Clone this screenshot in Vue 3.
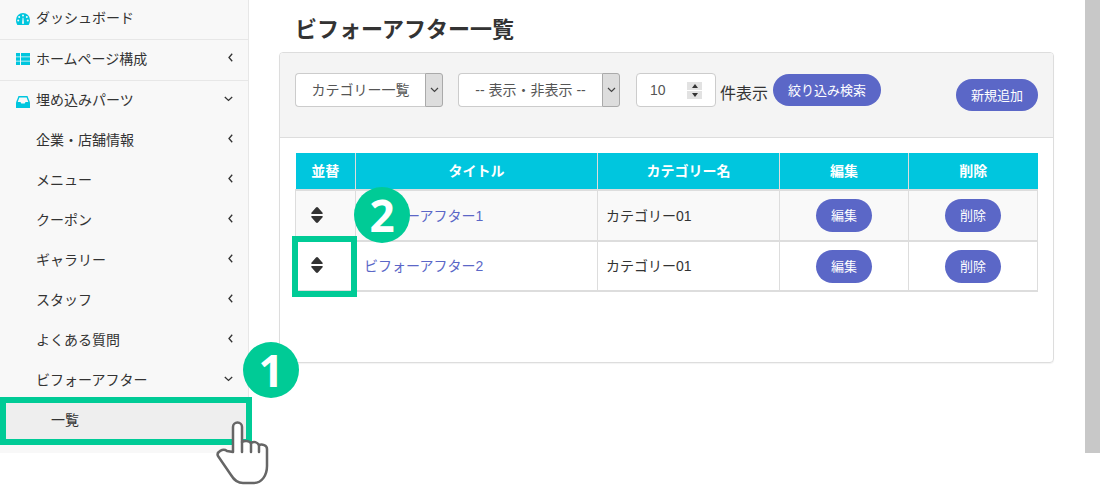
<script setup>
import { ref } from 'vue'

const menu = ref([
  { name: 'ダッシュボード', icon: 'gauge', line: true },
  { name: 'ホームページ構成', icon: 'list', arrow: 'left', line: true },
  { name: '埋め込みパーツ', icon: 'inbox', arrow: 'down' },
  { name: '企業・店舗情報', arrow: 'left' },
  { name: 'メニュー', arrow: 'left' },
  { name: 'クーポン', arrow: 'left' },
  { name: 'ギャラリー', arrow: 'left' },
  { name: 'スタッフ', arrow: 'left' },
  { name: 'よくある質問', arrow: 'left' },
  { name: 'ビフォーアフター', arrow: 'down' }
])

const rows = ref([
  { id: 1, title: 'ビフォーアフター1', category: 'カテゴリー01' },
  { id: 2, title: 'ビフォーアフター2', category: 'カテゴリー01' }
])
</script>

<template>
  <div class="page">
    <div class="layout">
      <aside class="side">
        <div v-for="item in menu" :key="item.name" class="menu-item" :class="{ line: item.line }">
          <svg v-if="item.icon === 'gauge'" class="ico" viewBox="0 0 14 12">
            <path fill="#00c6de" d="M7 0a7 7 0 0 0-7 7c0 1.900.5 3.500 1.300 5h11.400c.8-1.500 1.300-3.100 1.300-5a7 7 0 0 0-7-7z" />
            <circle cx="7" cy="2.400" r="1" fill="#f8f8f8" />
            <circle cx="3.200" cy="4" r="1" fill="#f8f8f8" />
            <circle cx="10.800" cy="4" r="1" fill="#f8f8f8" />
            <circle cx="2.200" cy="7.600" r="1" fill="#f8f8f8" />
            <circle cx="11.800" cy="7.600" r="1" fill="#f8f8f8" />
            <path fill="#f8f8f8" d="M6 10.800l.6-6h.8l.6 6z" />
          </svg>
          <svg v-else-if="item.icon === 'list'" class="ico" viewBox="0 0 14 12">
            <path fill="#00c6de" d="M0 0h4v3.500H0zM5 0h9v3.500H5zM0 4.300h4v3.500H0zM5 4.300h9v3.500H5zM0 8.500h4V12H0zM5 8.500h9V12H5z" />
          </svg>
          <svg v-else-if="item.icon === 'inbox'" class="ico inbox" viewBox="0 0 14 12">
            <path fill="#00c6de" d="M2.500 0h9L14 6.500V12H0V6.500z" />
            <path fill="#f8f8f8" d="M3.400 1.400h7.200l1.700 4.600H9.500l-.8 1.500H5.300L4.500 6H1.700z" />
          </svg>
          <span class="menu-name">{{ item.name }}</span>
          <svg v-if="item.arrow === 'left'" class="arrow left" viewBox="0 0 5 9">
            <path d="M4.200.8L1 4.500l3.200 3.700" />
          </svg>
          <svg v-if="item.arrow === 'down'" class="arrow down" viewBox="0 0 9 6">
            <path d="M.8 1l3.700 3.400L8.200 1" />
          </svg>
        </div>
        <div class="menu-sub">一覧</div>
      </aside>

      <main class="main">
        <h1 class="title">ビフォーアフター一覧</h1>
        <section class="card">
          <div class="filters">
            <div class="select cat">
              <span class="select-text">カテゴリー一覧</span>
              <span class="select-btn">
                <svg viewBox="0 0 9 6"><path d="M1 1l3.500 3.500L8 1" /></svg>
              </span>
            </div>
            <div class="select show">
              <span class="select-text">-- 表示・非表示 --</span>
              <span class="select-btn">
                <svg viewBox="0 0 9 6"><path d="M1 1l3.500 3.500L8 1" /></svg>
              </span>
            </div>
            <div class="number">
              <span>10</span>
              <span class="spin"><i class="up"></i><i class="down"></i></span>
            </div>
            <span class="count">件表示</span>
            <button class="btn search">絞り込み検索</button>
            <button class="btn add">新規追加</button>
          </div>
          <div class="body">
            <table class="list">
              <colgroup>
                <col style="width: 60px" />
                <col style="width: 242px" />
                <col style="width: 182px" />
                <col style="width: 129px" />
                <col style="width: 129px" />
              </colgroup>
              <thead>
                <tr>
                  <th>並替</th>
                  <th>タイトル</th>
                  <th>カテゴリー名</th>
                  <th>編集</th>
                  <th>削除</th>
                </tr>
              </thead>
              <tbody>
                <tr v-for="row in rows" :key="row.id">
                  <td class="center">
                    <svg class="sort" viewBox="0 0 12 16">
                      <path fill="#333" d="M6 0c.4 0 .7.200 1 .5l4.600 5.300c.5.600.1 1.300-.6 1.300H1c-.7 0-1.100-.7-.6-1.300L5 .5C5.300.2 5.600 0 6 0zM6 16c-.4 0-.7-.2-1-.5L.4 10.200c-.5-.6-.1-1.300.6-1.300h10c.7 0 1.100.7.6 1.300L7 15.500c-.3.300-.6.500-1 .5z" />
                    </svg>
                  </td>
                  <td><a class="link">{{ row.title }}</a></td>
                  <td>{{ row.category }}</td>
                  <td class="center"><button class="btn small">編集</button></td>
                  <td class="center"><button class="btn small">削除</button></td>
                </tr>
              </tbody>
            </table>
          </div>
        </section>
      </main>

      <div class="scrollbar"></div>
    </div>

    <div class="mark box-one"></div>
    <div class="mark box-two"></div>
    <div class="num num-one">1</div>
    <div class="num num-two">2</div>
    <svg class="hand" viewBox="0 0 90 90">
      <path d="M33 52V27a4.500 4.500 0 0 1 9 0v15c3-2 7-1 9 1 3-2 6-1 8 2 3-1 8 0 8 4v17c0 9-5 17-13 17H43c-6 0-9-3-12-8L18 56c-2-4 5-8 9-5z" />
      <path d="M42 42v10M51 43v9M59 45v7" />
    </svg>
  </div>
</template>

<style scoped>
.page {
  position: relative;
  width: 1100px;
  height: 490px;
  overflow: hidden;
  font-family: "Liberation Sans", "Noto Sans CJK JP", sans-serif;
  font-size: 14px;
  color: #333;
}
.layout {
  display: flex;
  height: 453px;
}
.side {
  width: 249px;
  box-sizing: border-box;
  flex: none;
  background: #f8f8f8;
  border-right: 1px solid #e7e7e7;
}
.menu-item {
  display: flex;
  align-items: center;
  box-sizing: border-box;
  height: 40px;
  padding-left: 36px;
  position: relative;
}
.menu-item.line {
  border-bottom: 1px solid #e7e7e7;
  height: 41px;
}
.menu-item:first-child {
  height: 40px;
}
.menu-name {
  position: relative;
  top: -2px;
}
.menu-item:first-child .menu-name {
  top: -3px;
}
.ico {
  position: absolute;
  left: 16px;
  top: 13px;
  width: 14px;
  height: 12px;
}
.ico.inbox {
  top: 15px;
}
.arrow {
  position: absolute;
  fill: none;
  stroke: #333;
  stroke-width: 1.300;
}
.arrow.left {
  left: 228px;
  top: 13px;
  width: 5px;
  height: 9px;
}
.arrow.down {
  left: 224px;
  top: 15px;
  width: 9px;
  height: 6px;
}
.menu-sub {
  height: 40px;
  line-height: 38px;
  padding-left: 51px;
  background: #eee;
}
.main {
  flex: 1;
  padding: 0 30px;
}
.title {
  margin: 16px 0 8px 16px;
  font-size: 22px;
  line-height: 28px;
  font-weight: 700;
  color: #333;
}
.card {
  width: 775px;
  height: 311px;
  box-sizing: border-box;
  border: 1px solid #ddd;
  border-radius: 4px;
  box-shadow: 0 1px 1px rgba(0, 0, 0, 0.05);
  overflow: hidden;
}
.filters {
  position: relative;
  display: flex;
  align-items: flex-start;
  height: 85px;
  box-sizing: border-box;
  padding: 20px 15px 0;
  background: #f4f4f4;
  border-bottom: 1px solid #ddd;
}
.select {
  display: flex;
  height: 34px;
  color: #555;
}
.select.cat {
  width: 148px;
  margin-right: 15px;
}
.select.show {
  width: 162px;
  margin-right: 16px;
}
.select-text {
  flex: 1;
  box-sizing: border-box;
  text-align: center;
  line-height: 32px;
  background: #fff;
  border: 1px solid #ccc;
  border-right: 0;
  border-radius: 4px 0 0 4px;
}
.select-btn {
  width: 18px;
  flex: none;
  box-sizing: border-box;
  display: flex;
  align-items: center;
  justify-content: center;
  background: #ddd;
  border: 1px solid #aaa;
  border-radius: 0 3px 3px 0;
}
.select-btn svg {
  width: 9px;
  height: 6px;
  fill: none;
  stroke: #444;
  stroke-width: 1.200;
}
.number {
  display: flex;
  align-items: center;
  justify-content: space-between;
  width: 80px;
  height: 34px;
  box-sizing: border-box;
  padding: 0 13px;
  border: 1px solid #ccc;
  border-radius: 4px;
  background: #fff;
  color: #555;
}
.spin {
  display: flex;
  flex-direction: column;
  gap: 1px;
  width: 15px;
  height: 17px;
  align-items: center;
}
.spin i {
  display: flex;
  flex: 1;
  width: 100%;
  background: #e2e2e2;
  justify-content: center;
  align-items: center;
}
.spin i::after {
  content: "";
  width: 0;
  height: 0;
  border-left: 3px solid transparent;
  border-right: 3px solid transparent;
}
.spin .up::after {
  border-bottom: 4px solid #333;
}
.spin .down::after {
  border-top: 4px solid #333;
}
.count {
  margin: 9px 5px 0 4px;
  font-size: 16px;
  line-height: 24px;
}
.btn {
  border: 0;
  padding: 0 0 2px;
  font-family: inherit;
  color: #fff;
  background: #5b67c7;
  font-size: 13px;
}
.search {
  width: 108px;
  height: 32px;
  margin-top: 1px;
  border-radius: 16px;
}
.add {
  position: absolute;
  left: 676px;
  top: 26px;
  width: 82px;
  height: 32px;
  border-radius: 16px;
}
.body {
  padding: 15px;
}
.list {
  width: 742px;
  table-layout: fixed;
  border-collapse: collapse;
}
.list th {
  height: 34px;
  padding: 0 0 2px;
  background: #00c6de;
  color: #fff;
  font-size: 14px;
  font-weight: 700;
  border-left: 1px solid #ddd;
  border-bottom: 2px solid #ddd;
}
.list th:first-child {
  border-left: 0;
}
.list td {
  height: 47px;
  padding: 0 8px 2px;
  border: 1px solid #ddd;
  border-bottom-width: 2px;
  font-size: 14px;
}
.list td.center {
  padding-bottom: 0;
  height: 49px;
}
.list tbody tr:nth-child(odd) td {
  background: #f9f9f9;
}
.list tbody tr:nth-child(even) td {
  height: 46px;
}
.list tbody tr:nth-child(even) td.center {
  height: 48px;
}
.center {
  text-align: center;
}
.sort {
  display: block;
  width: 12px;
  height: 16px;
  margin: 0 auto;
  transform: translate(-9px, -1px);
}
.link {
  color: #5b67c7;
}
.small {
  display: block;
  width: 56px;
  height: 33px;
  margin: 0 auto;
  border-radius: 17px;
}
.scrollbar {
  position: absolute;
  left: 1085px;
  top: 0;
  width: 15px;
  height: 453px;
  background: #c8c8c8;
}
.mark {
  position: absolute;
  box-sizing: border-box;
  border: 6px solid #00cb96;
}
.box-one {
  left: 0;
  top: 397px;
  width: 252px;
  height: 48px;
}
.box-two {
  left: 292px;
  top: 236px;
  width: 65px;
  height: 61px;
}
.num {
  position: absolute;
  width: 56px;
  height: 56px;
  border-radius: 50%;
  background: #00cb96;
  color: #fff;
  font-family: "Noto Sans", sans-serif;
  font-size: 44px;
  font-weight: 700;
  line-height: 56px;
  text-align: center;
}
.num-one {
  left: 243px;
  top: 342px;
}
.num-two {
  left: 354px;
  top: 187px;
}
.hand {
  position: absolute;
  left: 200px;
  top: 400px;
  width: 90px;
  height: 90px;
}
.hand path:first-child {
  fill: #fff;
}
.hand path {
  fill: none;
  stroke: #666;
  stroke-width: 2.500;
  stroke-linejoin: round;
  stroke-linecap: round;
}
</style>
